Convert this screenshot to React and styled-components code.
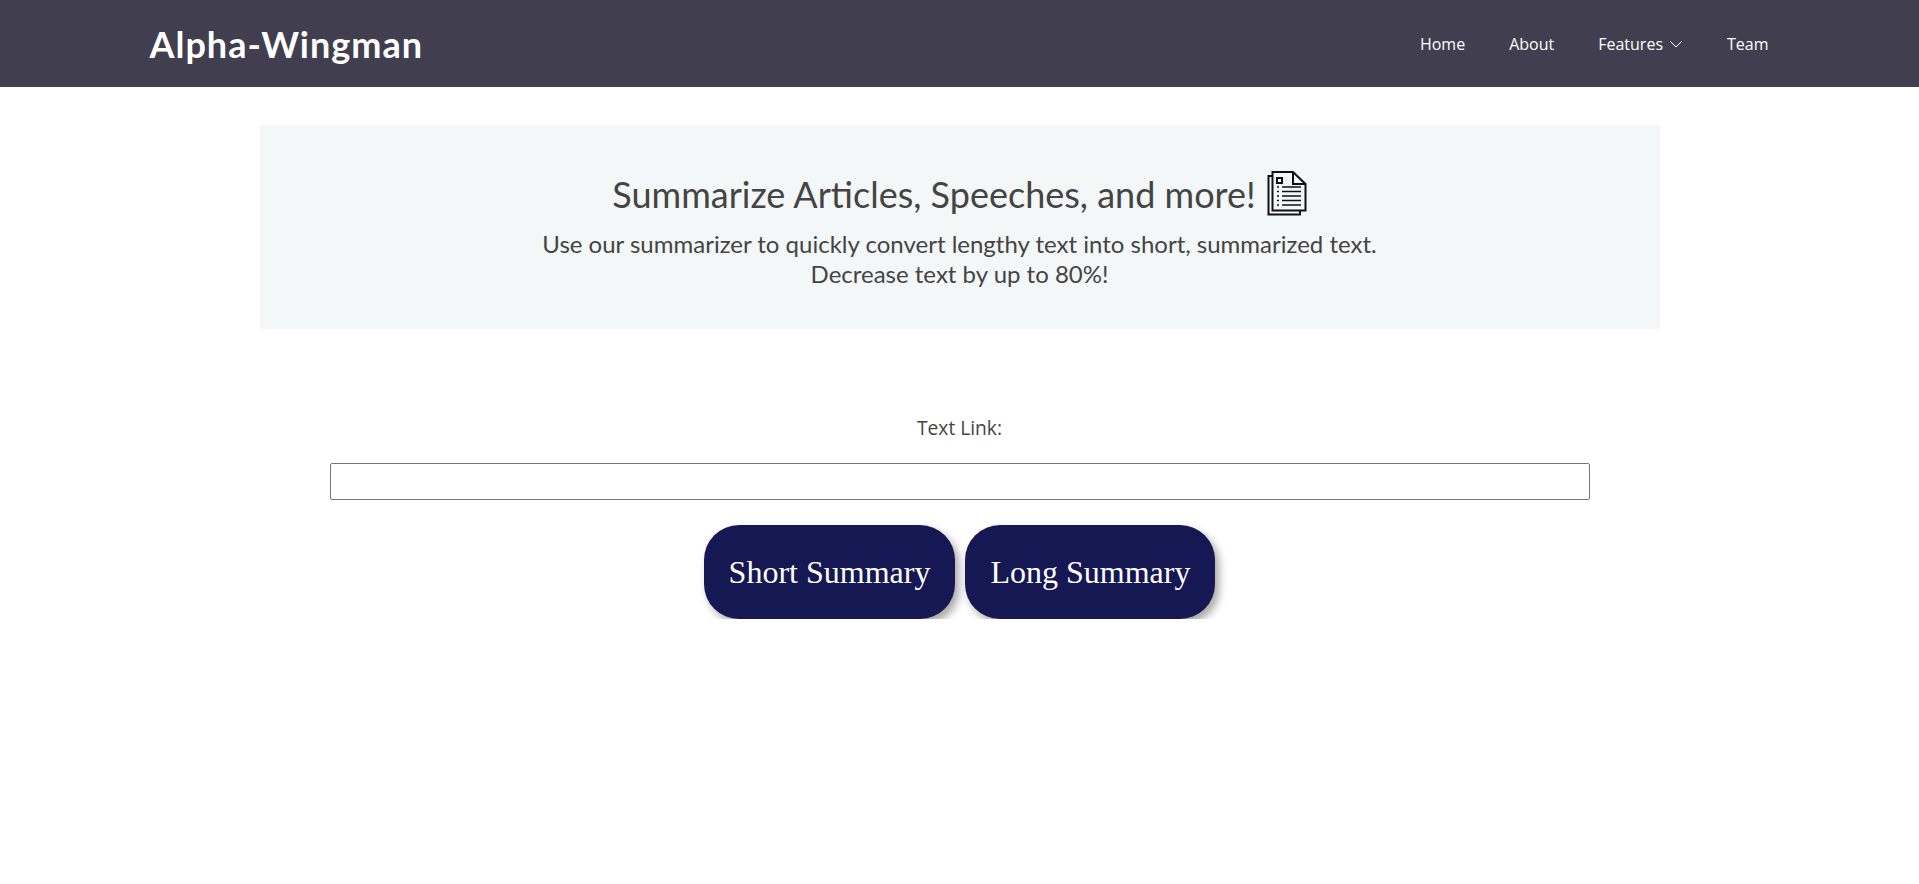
import React from 'react';
import styled, { createGlobalStyle } from 'styled-components';

const GlobalStyle = createGlobalStyle`
  html, body {
    margin: 0;
    padding: 0;
    background: #fff;
  }
  body {
    font-family: "Open Sans", "Liberation Sans", sans-serif;
    color: #444;
  }
`;

const Header = styled.header`
  height: 87px;
  background: #413e4f;
  display: flex;
  align-items: center;
`;

const HeaderInner = styled.div`
  width: 1620px;
  margin: 0 auto;
  padding: 0 0 0 0;
  display: flex;
  align-items: center;
  justify-content: space-between;
`;

const Logo = styled.a`
  font-family: "Lato", sans-serif;
  font-size: 36px;
  font-weight: 700;
  letter-spacing: 1px;
  color: #fff;
  line-height: 1;
`;

const Nav = styled.nav`
  display: flex;
  align-items: center;
  gap: 44px;
  padding-right: 1px;
`;

const NavLink = styled.a`
  display: flex;
  align-items: center;
  gap: 6px;
  font-size: 16px;
  color: #fff;
`;

const Main = styled.main`
  display: flex;
  flex-direction: column;
  align-items: center;
`;

const Banner = styled.section`
  box-sizing: border-box;
  width: 1400px;
  height: 204px;
  margin-top: 38px;
  padding-top: 46px;
  background: #f4f7f8;
  text-align: center;
  font-family: "Lato", sans-serif;
  color: #444;
`;

const BannerTitle = styled.h2`
  margin: 0 0 12px;
  display: flex;
  align-items: center;
  justify-content: center;
  gap: 11px;
  font-size: 36px;
  font-weight: 400;
  line-height: 46px;
`;

const BannerText = styled.p`
  margin: 0;
  font-size: 24px;
  line-height: 30px;
`;

const Form = styled.form`
  display: flex;
  flex-direction: column;
  align-items: center;
  margin-top: 86px;
`;

const Label = styled.label`
  font-size: 19.2px;
  line-height: 26px;
  color: #444;
`;

const TextInput = styled.input`
  box-sizing: border-box;
  width: 1260px;
  height: 37px;
  margin-top: 22px;
  border: 1px solid #767676;
  border-radius: 2px;
  background: #fff;
`;

const ButtonRow = styled.div`
  display: flex;
  gap: 10px;
  margin-top: 25px;
`;

const SummaryButton = styled.button`
  height: 94px;
  padding: 0 25px;
  border: none;
  border-radius: 35px;
  background: #151853;
  color: #fff;
  font-family: "Liberation Serif", "Times New Roman", serif;
  font-size: 32px;
  box-shadow: 4px 5px 8px rgba(0, 0, 0, 0.35);
  cursor: pointer;
`;

const DocIcon = () => (
  <svg width="40" height="46" viewBox="0 0 40 46" fill="none" stroke="#111" strokeWidth="2">
    <path d="M5 5H1.5V43.5H33V40" />
    <path d="M5.5 1H26L38.5 13V39.5H5.5Z" fill="#f4f7f8" />
    <path d="M26 1V13H38.5" />
    <rect x="10" y="7" width="5" height="5" />
    <path d="M10 16h2M15 16h19M10 20.5h2M15 20.5h19M10 25h2M15 25h19M10 29.5h2M15 29.5h19M10 34h2M15 34h19" strokeWidth="1.5" />
  </svg>
);

const Chevron = () => (
  <svg width="14" height="14" viewBox="0 0 14 14" fill="none" stroke="#fff" strokeWidth="1">
    <path d="M1 4l6 6 6-6" />
  </svg>
);

export default function App() {
  return (
    <>
      <GlobalStyle />
      <Header>
        <HeaderInner>
          <Logo>Alpha-Wingman</Logo>
          <Nav>
            <NavLink>Home</NavLink>
            <NavLink>About</NavLink>
            <NavLink>Features <Chevron /></NavLink>
            <NavLink>Team</NavLink>
          </Nav>
        </HeaderInner>
      </Header>
      <Main>
        <Banner>
          <BannerTitle>Summarize Articles, Speeches, and more! <DocIcon /></BannerTitle>
          <BannerText>Use our summarizer to quickly convert lengthy text into short, summarized text.</BannerText>
          <BannerText>Decrease text by up to 80%!</BannerText>
        </Banner>
        <Form onSubmit={(e) => e.preventDefault()}>
          <Label htmlFor="link">Text Link:</Label>
          <TextInput id="link" type="text" />
          <ButtonRow>
            <SummaryButton>Short Summary</SummaryButton>
            <SummaryButton>Long Summary</SummaryButton>
          </ButtonRow>
        </Form>
      </Main>
    </>
  );
}
